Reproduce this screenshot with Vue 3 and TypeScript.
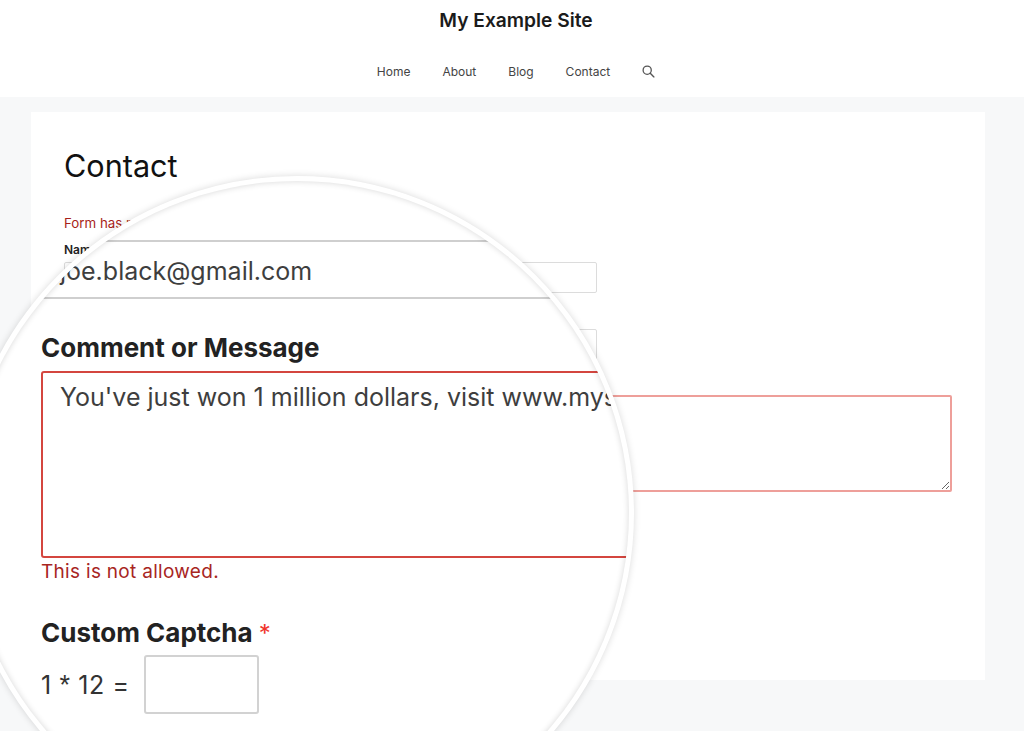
<script setup lang="ts">
const navItems: string[] = ['Home', 'About', 'Blog', 'Contact']
</script>

<template>
  <div class="page">
    <header class="header">
      <div class="site-title">My Example Site</div>
      <nav class="nav">
        <a v-for="item in navItems" :key="item" class="nav-link">{{ item }}</a>
        <svg class="search" viewBox="0 0 14 14" width="13" height="13" aria-hidden="true">
          <circle cx="5.6" cy="5.6" r="4.4" fill="none" stroke="#555" stroke-width="1.4" />
          <path d="M8.9 8.9 L12.8 12.8" stroke="#555" stroke-width="1.5" stroke-linecap="round" />
        </svg>
      </nav>
    </header>

    <main class="main">
      <section class="card">
        <h1 class="title">Contact</h1>
        <p class="form-error">Form has not been submitted, please see the errors below.</p>
        <label class="label first">Name</label>
        <input class="field" type="text" />
        <label class="label second">Email</label>
        <input class="field" type="text" />
        <label class="label third">Comment or Message</label>
        <textarea class="message-box"></textarea>
      </section>
    </main>

    <div class="lens">
      <div class="lens-clip">
        <div class="lens-content">
          <div class="big-input">joe.black@gmail.com</div>
          <div class="big-label comment">Comment or Message</div>
          <div class="big-area">You've just won 1 million dollars, visit www.mysite.com</div>
          <div class="big-error">This is not allowed.</div>
          <div class="big-label captcha">Custom Captcha <span class="star">*</span></div>
          <div class="captcha-row">
            <span class="sum">1 <span class="times">*</span> 12 =</span>
            <span class="captcha-box"></span>
          </div>
        </div>
      </div>
    </div>
  </div>
</template>

<style>
html, body {
  margin: 0;
  overflow: hidden;
}
</style>

<style scoped>
.page {
  position: relative;
  width: 1024px;
  height: 731px;
  overflow: hidden;
  background: #f7f8f9;
  font-family: Inter, "Liberation Sans", sans-serif;
  color: #222;
}

.header {
  height: 97px;
  box-sizing: border-box;
  padding-left: 8px;
  background: #fff;
  display: flex;
  flex-direction: column;
  align-items: center;
}

.site-title {
  margin-top: 6px;
  line-height: 28px;
  font-size: 19.2px;
  font-weight: 600;
  color: #1b1b1b;
}

.nav {
  margin-top: 22px;
  height: 30px;
  display: flex;
  align-items: center;
  gap: 32px;
  font-size: 12px;
  color: #444;
}

.main {
  padding: 15px 39px 0 31px;
}

.card {
  width: 954px;
  height: 568px;
  box-sizing: border-box;
  background: #fff;
  padding: 33px 33px 0;
}

.title {
  margin: 0;
  font-size: 30.6px;
  line-height: 42px;
  font-weight: 400;
  color: #111;
}

.form-error {
  margin: 27px 0 0;
  font-size: 13.3px;
  line-height: 18px;
  color: #a81f1a;
  white-space: nowrap;
}

.label {
  display: block;
  font-size: 12px;
  line-height: 16px;
  font-weight: 600;
  color: #222;
}
.first { margin-top: 10px; margin-bottom: 4px; }
.second { margin-top: 20px; }
.third { margin-top: 19px; }

.field {
  display: block;
  width: 533px;
  height: 31px;
  box-sizing: border-box;
  border: 1px solid #dcdcdc;
  border-radius: 2px;
  background: #fff;
  padding: 0;
  margin: 0;
}

.message-box {
  display: block;
  width: 888px;
  height: 97px;
  box-sizing: border-box;
  border: 2px solid #ee9f9a;
  border-radius: 2px;
  background: #fff;
  padding: 0;
  margin: 0;
  outline: none;
  resize: vertical;
}

.lens {
  position: absolute;
  left: -40px;
  top: 176px;
  width: 674px;
  height: 674px;
  box-sizing: border-box;
  border-radius: 50%;
  border: 5px solid #fff;
  background: #fff;
  box-shadow: 0 0 7px rgba(0, 0, 0, 0.15);
}

.lens::after {
  content: "";
  position: absolute;
  inset: 0;
  border-radius: 50%;
  box-shadow: inset 0 0 6px rgba(0, 0, 0, 0.16);
  pointer-events: none;
}

.lens-clip {
  width: 664px;
  height: 664px;
  border-radius: 50%;
  overflow: hidden;
  background: #fff;
}

.lens-content {
  width: 900px;
  padding: 59px 0 0 76px;
}

.big-input {
  width: 800px;
  height: 59px;
  box-sizing: border-box;
  border-top: 2px solid #cfcfcf;
  border-bottom: 2px solid #cfcfcf;
  border-left: 2px solid #cfcfcf;
  padding-left: 17px;
  font-size: 25px;
  line-height: 59px;
  color: #3e3e3e;
}

.big-label {
  font-size: 26px;
  line-height: 32px;
  font-weight: 700;
  color: #222;
}
.comment { margin-top: 33px; }
.captcha { margin-top: 33px; }

.star {
  color: #f0352b;
  font-weight: 400;
  font-size: 24px;
}

.big-area {
  margin-top: 7px;
  width: 800px;
  height: 187px;
  box-sizing: border-box;
  border: 2px solid #d4463f;
  border-radius: 3px;
  padding: 6px 0 0 17px;
  font-size: 25px;
  line-height: 36px;
  color: #3e3e3e;
  white-space: nowrap;
}

.big-error {
  margin-top: 2px;
  font-size: 19px;
  line-height: 24px;
  letter-spacing: 0.3px;
  color: #a8261f;
}

.captcha-row {
  margin-top: 5px;
  display: flex;
  align-items: center;
  gap: 14px;
}

.sum {
  font-size: 25px;
  letter-spacing: 0.6px;
  color: #333;
  position: relative;
  top: 1px;
}

.times {
  font-family: "Liberation Sans", sans-serif;
  font-size: 27px;
}

.captcha-box {
  display: block;
  width: 115px;
  height: 59px;
  box-sizing: border-box;
  border: 2px solid #d2d2d2;
  border-radius: 3px;
  background: #fff;
}
</style>
